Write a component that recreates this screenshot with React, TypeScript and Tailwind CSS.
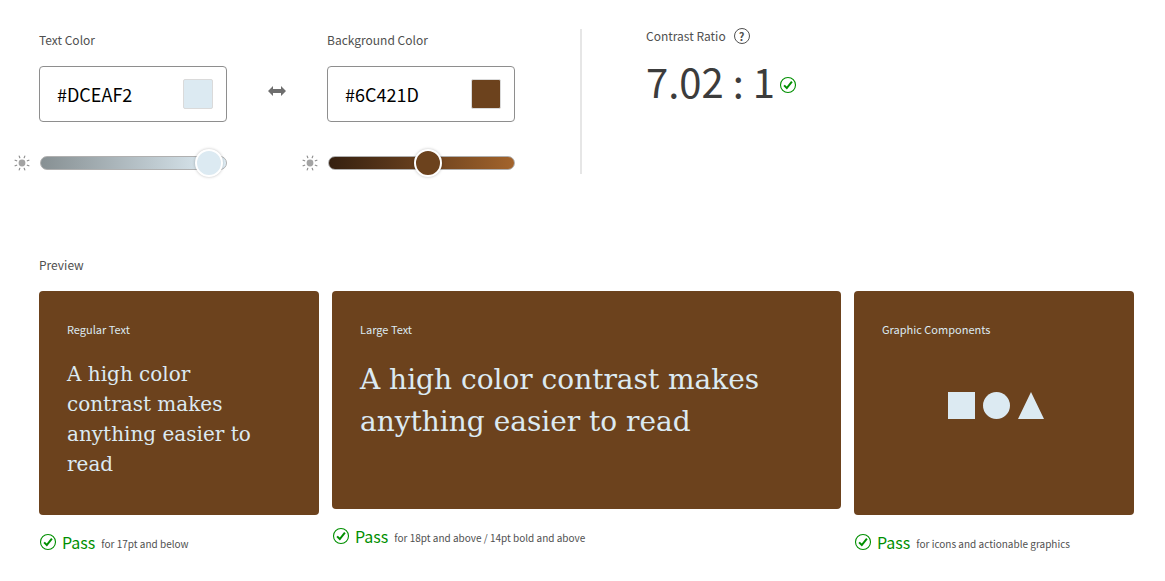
import { useState } from "react";
import type { ReactNode } from "react";

function CheckIcon({ className }: { className: string }) {
  return (
    <svg viewBox="0 0 18 18" className={className} fill="none" aria-hidden="true">
      <circle cx="9" cy="9" r="7.5" stroke="#008f00" strokeWidth="1.1" />
      <path d="M5.1 9.4 7.8 12 12.9 5.6" stroke="#008f00" strokeWidth="2" />
    </svg>
  );
}

function SunIcon() {
  return (
    <svg viewBox="0 0 16 16" className="size-4 shrink-0" aria-hidden="true">
      <circle cx="8" cy="8" r="3.4" fill="#a3a3a3" />
      <g stroke="#8f8f8f" strokeWidth="1.2" strokeLinecap="round">
        <path d="M5.8 2.7 5.2 1.1M10.2 2.7 10.8 1.1M13.3 5.8 14.9 5.2M13.3 10.2 14.9 10.8M10.2 13.3 10.8 14.9M5.8 13.3 5.2 14.9M2.7 10.2 1.1 10.8M2.7 5.8 1.1 5.2" />
      </g>
    </svg>
  );
}

type ColorFieldProps = {
  id: string;
  label: string;
  initial: string;
  level: number;
  swatch: string;
  track: string;
};

function ColorField({ id, label, initial, level, swatch, track }: ColorFieldProps) {
  const [hex, setHex] = useState(initial);
  const [brightness, setBrightness] = useState(level);
  return (
    <div className="w-[188px] shrink-0">
      <label htmlFor={id} className="block text-xs leading-5 text-[#505050]">
        {label}
      </label>
      <div className="mt-4 flex h-14 items-center rounded border border-[#8e8e8e] pr-[13px] pl-[17px]">
        <input
          id={id}
          value={hex}
          onChange={(e) => setHex(e.target.value)}
          className="min-w-0 flex-1 bg-transparent text-lg leading-6 text-black outline-none"
        />
        <button
          type="button"
          aria-label={`Pick ${label}`}
          className={`size-[30px] shrink-0 rounded-xs border border-[#dadada] ${swatch}`}
        />
      </div>
      <div className="mt-[27px] -ml-[25px] flex items-center gap-2.5">
        <SunIcon />
        <input
          type="range"
          aria-label={`${label} brightness`}
          min={0}
          max={100}
          value={brightness}
          onChange={(e) => setBrightness(Number(e.target.value))}
          className={`h-7 min-w-0 flex-1 appearance-none bg-transparent [&::-webkit-slider-runnable-track]:h-[14px] [&::-webkit-slider-runnable-track]:rounded-full [&::-webkit-slider-runnable-track]:border [&::-webkit-slider-runnable-track]:border-[#b0b0b0] [&::-webkit-slider-thumb]:-mt-2 [&::-webkit-slider-thumb]:size-7 [&::-webkit-slider-thumb]:appearance-none [&::-webkit-slider-thumb]:rounded-full [&::-webkit-slider-thumb]:border-2 [&::-webkit-slider-thumb]:border-white [&::-webkit-slider-thumb]:shadow-[0_0_3px_rgba(0,0,0,0.25)] ${track}`}
        />
      </div>
    </div>
  );
}

function PreviewCard({ title, note, size, children }: { title: string; note: string; size: string; children: ReactNode }) {
  return (
    <article>
      <div className={`flex flex-col rounded bg-[#6c421d] pt-7 pl-7 text-[#dceaf2] ${size}`}>
        <h3 className="text-[11px] leading-5">{title}</h3>
        {children}
      </div>
      <p className="mt-[15px] flex items-center text-[#008f00]">
        <CheckIcon className="size-[18px] shrink-0" />
        <span className="ml-[5px] text-base leading-6">Pass</span>
        <span className="ml-1.5 pt-1 text-[10px] leading-4 text-[#505050]">{note}</span>
      </p>
    </article>
  );
}

export default function App() {
  return (
    <main className="bg-white pt-[30px] pr-[31px] pb-6 pl-[39px] font-['Noto_Sans_CJK_SC',sans-serif]">
      <section className="flex items-start">
        <ColorField
          id="text-color"
          label="Text Color"
          initial="#DCEAF2"
          level={98}
          swatch="bg-[#dceaf2]"
          track="[&::-webkit-slider-runnable-track]:bg-linear-to-r [&::-webkit-slider-runnable-track]:from-[#879093] [&::-webkit-slider-runnable-track]:to-[#e2f0f8] [&::-webkit-slider-thumb]:bg-[#dceaf2]"
        />
        <button type="button" aria-label="Swap colors" className="mt-[52px] flex w-[100px] shrink-0 justify-center">
          <svg viewBox="0 0 18 18" className="size-[18px]" fill="#6e6e6e" aria-hidden="true">
            <path d="M0 9 5 4V7H13V4L18 9 13 14V11H5V14Z" />
          </svg>
        </button>
        <ColorField
          id="background-color"
          label="Background Color"
          initial="#6C421D"
          level={54}
          swatch="bg-[#6c421d]"
          track="[&::-webkit-slider-runnable-track]:bg-linear-to-r [&::-webkit-slider-runnable-track]:from-[#352010] [&::-webkit-slider-runnable-track]:to-[#a3642c] [&::-webkit-slider-thumb]:bg-[#6c421d]"
        />
        <div className="-mt-px ml-[65px] h-[145px] w-[2px] shrink-0 bg-[#e6e6e6]" />
        <div className="-mt-1 ml-16">
          <div className="flex items-center gap-2">
            <h2 className="text-xs leading-5 text-[#505050]">Contrast Ratio</h2>
            <button type="button" aria-label="About contrast ratio" className="flex size-4 items-center justify-center rounded-full border border-[#505050] text-[11px] leading-none font-bold text-[#505050]">
              ?
            </button>
          </div>
          <p className="mt-[11px] flex items-center gap-1 text-[40px] leading-12 text-[#3c3c3c]">
            7.02 : 1
            <CheckIcon className="mt-2 size-[18px]" />
          </p>
        </div>
      </section>

      <section className="mt-[78px]">
        <h2 className="text-xs leading-5 text-[#505050]">Preview</h2>
        <div className="mt-4 grid grid-cols-[280fr_509fr_280fr] items-start gap-[13px]">
          <PreviewCard title="Regular Text" note="for 17pt and below" size="min-h-[224px] pr-14">
            <p className="mt-5 font-['DejaVu_Serif',serif] text-xl leading-[30px]">
              A high color contrast makes anything easier to read
            </p>
          </PreviewCard>
          <PreviewCard title="Large Text" note="for 18pt and above / 14pt bold and above" size="min-h-[218px] pr-14">
            <p className="mt-5 font-['DejaVu_Serif',serif] text-[28px] leading-[42px]">
              A high color contrast makes anything easier to read
            </p>
          </PreviewCard>
          <PreviewCard title="Graphic Components" note="for icons and actionable graphics" size="min-h-[224px] pr-7">
            <svg viewBox="-4 0 100 27" className="mt-[53px] h-[27px] w-[100px] self-center" fill="#dceaf2" aria-hidden="true">
              <path d="M0 0H27V27H0ZM83 0 96 27H70Z" />
              <circle cx="48.5" cy="13.5" r="13.5" />
            </svg>
          </PreviewCard>
        </div>
      </section>
    </main>
  );
}
